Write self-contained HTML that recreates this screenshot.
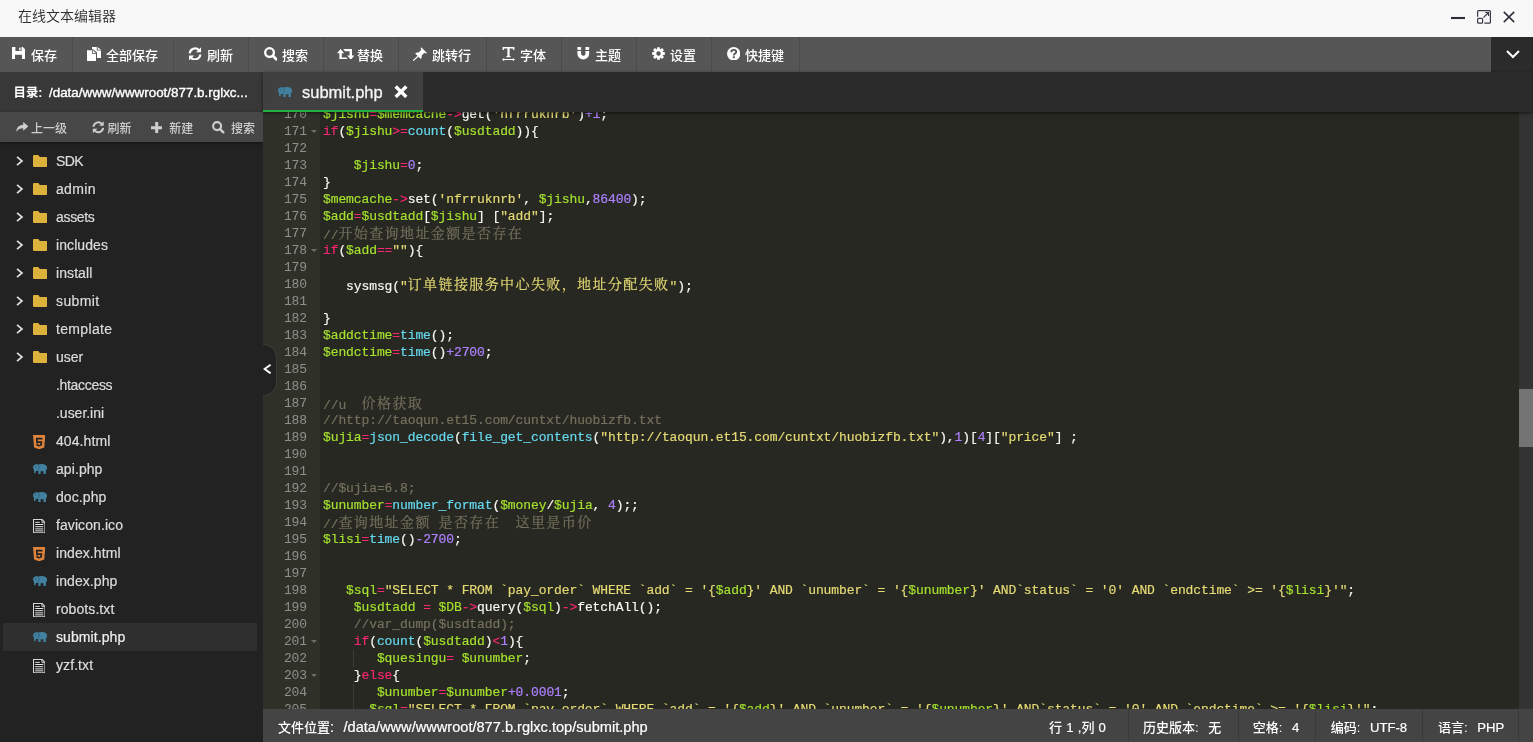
<!DOCTYPE html>
<html lang="zh-CN">
<head>
<meta charset="utf-8">
<title>在线文本编辑器</title>
<style>
*{box-sizing:border-box;margin:0;padding:0}
html,body{width:1533px;height:742px;overflow:hidden;background:#222}
body{position:relative;font-family:"Liberation Sans","Noto Sans CJK SC",sans-serif;font-size:13px;color:#fff}
svg{display:block}
#app{position:absolute;left:0;top:0;width:1533px;height:742px;will-change:transform}
#title{position:absolute;left:0;top:0;width:1533px;height:37px;background:#f8f8f8;color:#2e2e2e;font-weight:350;font-size:14px;line-height:32px;padding-left:18px}
#title .wc{position:absolute;top:0;height:37px}
#bar{position:absolute;left:0;top:37px;width:1533px;height:35px;background:#565656}
#bar .it{position:absolute;top:0;height:35px;border-right:1px solid #4c4c4c;line-height:35px;font-size:13px;color:#fff;white-space:nowrap}
#bar .it svg{position:absolute;top:10px;left:12px}
#bar .it b{position:absolute;font-weight:500;top:1px}
#bar .dd{position:absolute;right:0;top:0;width:42px;height:35px;background:#2b2b2b}
#side{position:absolute;left:0;top:72px;width:263px;height:670px;background:#222}
#dirt{position:absolute;left:0;top:0;width:263px;height:40px;background:#383838;font-weight:700;font-size:12.4px;line-height:42px;white-space:nowrap}
#dirt span{position:absolute;top:0}
#dirt .l{font-weight:400;font-size:13.4px;-webkit-text-stroke:0.36px}
#dtool{position:absolute;left:0;top:40px;width:263px;height:30px;background:#474747;color:#cdcdcd;font-size:12px;line-height:30px;box-shadow:0 1px 3px rgba(0,0,0,.5)}
#dtool span{position:absolute;top:2px;white-space:nowrap;font-weight:500}
#dtool svg{position:absolute}
#tree{position:absolute;left:0;top:75px;width:263px}
#tree .r{position:relative;height:28px;line-height:29px;font-size:14px;letter-spacing:0.08px;-webkit-text-stroke:0.2px;color:#dcdcdc;padding-left:56px;white-space:nowrap}
#tree .r.sel{background:#2f2f2f;margin:0 6px 0 3px;padding-left:53px;color:#f0f0f0}
#tree .r svg{position:absolute}
#tabs{position:absolute;left:263px;top:72px;width:1270px;height:40px;background:#2b2b2b;box-shadow:0 1px 3px rgba(0,0,0,.6);z-index:3}
#tab{position:absolute;left:0;top:0;width:160px;height:40px;background:#404040;border-bottom:2px solid #22b140;font-size:16.5px;line-height:41px;color:#f4f4f4;-webkit-text-stroke:0.3px}
#tab span{position:absolute;left:39px;top:0}
#ed{position:absolute;left:263px;top:112px;width:1256px;height:597px;background:#272822;overflow:hidden}
#gut{position:absolute;left:0;top:-6px;width:57px;bottom:0;background:#2f3129;color:#8f908a}
#code{position:absolute;left:60px;top:-6px;color:#f8f8f2}
.cl{-webkit-text-stroke:0.18px}
.gl,.cl{height:17px;line-height:17px;font-family:"Liberation Mono",monospace;font-size:13px;letter-spacing:-0.1px;white-space:pre}
.gl{position:relative;text-align:right;padding-right:13px}
.gl .fold{position:absolute;right:3.5px;top:7px;width:0;height:0;border-left:3px solid transparent;border-right:3px solid transparent;border-top:3.5px solid #6e6f69}
.cl .z{font-family:"Noto Serif CJK SC","Noto Sans CJK SC",serif;font-size:14px;letter-spacing:1.4px;position:relative;top:-1.5px}
.k{color:#f92672}.v{color:#a6e22e}.f{color:#66d9ef}.n{color:#ae81ff}.s{color:#e6db74}.c{color:#75715e}
.ig{display:inline-block;box-shadow:inset -1px 0 0 #3b3c35}
#sb{position:absolute;left:1519px;top:112px;width:14px;height:597px;background:#333}
#sb i{position:absolute;left:0;top:277px;width:14px;height:58px;background:#747474}
#status{position:absolute;left:263px;top:709px;width:1270px;height:33px;background:#444;font-size:13px;line-height:32px;color:#fff;z-index:4}
#status div{position:absolute;top:0;height:33px;white-space:nowrap;line-height:37px;font-weight:500}
#status .sp{border-left:1px solid #3a3a3a}
#status .l{font-size:14.6px;-webkit-text-stroke:0.2px}
#status .l2{font-size:13.1px;-webkit-text-stroke:0.2px}
#status .co{margin-right:6px}
#handle{position:absolute;left:263px;top:344px;width:14px;height:52px;background:#222;border-radius:0 14px 14px 0;z-index:5;border:1px solid #3a3b36;border-left:0}
</style>
</head>
<body>
<div id="app">
<div id="title">在线文本编辑器
<svg class="wc" width="90" height="37" viewBox="0 0 90 37" style="position:absolute;left:1443px;top:0"><path d="M8 18H22" stroke="#2e2d3c" stroke-width="2.1"/><g fill="none" stroke="#3a3948" stroke-width="1.2"><path d="M34.6 16.7V11.6Q34.6 10.6 35.6 10.6H46.4Q47.4 10.6 47.4 11.6V22.2Q47.4 23.2 46.4 23.2H41.3"/><rect x="34.6" y="18.4" width="5" height="4.8" rx="1"/><path d="M40.4 17.6L45.5 12.5M42.2 12.5H45.5V16"/></g><path d="M60.8 11.9L71.2 22.1M71.2 11.9L60.8 22.1" stroke="#2e2d3c" stroke-width="1.5"/></svg>
</div>
<div id="bar">
<div class="it" style="left:0px;width:73px"><svg width="13" height="12" viewBox="0 0 13 12" style="left:12.4px;top:10px"><path fill="#fff" fill-rule="evenodd" d="M0 0H10.8L13 2.2V12H0ZM3.4 0V4H9.6V0ZM3 7.8V12H10V7.8Z"/><rect fill="#fff" x="7.2" y="0.6" width="1.5" height="2.8"/></svg><b style="left:31px">保存</b></div>
<div class="it" style="left:73px;width:101px"><svg width="14" height="14" viewBox="0 0 14 14" style="left:14.2px;top:9.5px"><path fill="#fff" d="M0 3.2H5.2V7H9V14H0Z"/><path fill="#fff" d="M6 3.2L9 6.2H6Z"/><path fill="#fff" d="M5 0H9.8V3.6H14V11H10V5.6L6.6 2.4H5Z"/><path fill="#fff" d="M10.7 0L14 2.8H10.7Z"/></svg><b style="left:33px">全部保存</b></div>
<div class="it" style="left:174px;width:75px"><svg width="14.1" height="13.9" viewBox="0 0 13.5 13.5" style="left:14.4px;top:9.6px"><g fill="none" stroke="#fff" stroke-width="2.1"><path d="M1.6 6.2A5.2 5.2 0 0 1 10.6 3.1"/><path d="M11.9 7.3A5.2 5.2 0 0 1 2.9 10.4"/></g><path fill="#fff" d="M12.6 0.3V5.2H7.7Z"/><path fill="#fff" d="M0.9 13.2V8.3H5.8Z"/></svg><b style="left:33px">刷新</b></div>
<div class="it" style="left:249px;width:75px"><svg width="13.5" height="13.5" viewBox="0 0 13.5 13.5" style="left:14.8px;top:10.3px"><circle cx="5.55" cy="5.55" r="4.35" fill="none" stroke="#fff" stroke-width="2.3"/><path d="M8.8 8.8L12.3 12.3" stroke="#fff" stroke-width="2.7" stroke-linecap="round"/></svg><b style="left:33px">搜索</b></div>
<div class="it" style="left:324px;width:75px"><svg width="17.4" height="10.8" viewBox="0 0 17.4 10.8" style="left:12.8px;top:11.7px"><path fill="#fff" d="M3.6 0L7.2 4.2H4.8V8.6H9.4L11.2 10.8H2.4V4.2H0Z"/><path fill="#fff" d="M13.8 10.8L10.2 6.6H12.6V2.2H8L6.2 0H15V6.6H17.4Z"/></svg><b style="left:33px">替换</b></div>
<div class="it" style="left:399px;width:88px"><svg width="14.4" height="13.6" viewBox="0 0 14.4 13.6" style="left:14.4px;top:10.2px"><path fill="#fff" d="M8.2 0.2L14 6L12.6 6.6L11.4 5.8L8.6 8.6C9 10 8.6 11.2 7.8 12L2.2 6.4C3 5.6 4.2 5.2 5.6 5.6L8.4 2.8L7.6 1.6Z"/><path d="M4.8 9.4L0.4 13.4" stroke="#fff" stroke-width="1.3" stroke-linecap="round"/></svg><b style="left:33px">跳转行</b></div>
<div class="it" style="left:487px;width:75px"><svg width="13" height="14.2" viewBox="0 0 13 14.2" style="left:15px;top:9.9px"><path fill="#fff" d="M0.6 0H12.4V3H11.3C11.1 2 10.7 1.6 9.8 1.6H7.6V8.4C7.6 9 8 9.3 9 9.4V10.3H4V9.4C5 9.3 5.4 9 5.4 8.4V1.6H3.2C2.3 1.6 1.9 2 1.7 3H0.6Z"/><path fill="#fff" d="M0 12.6L2.2 11V12.1H10.8V11L13 12.6L10.8 14.2V13.1H2.2V14.2Z"/></svg><b style="left:33px">字体</b></div>
<div class="it" style="left:562px;width:75px"><svg width="12.6" height="12.6" viewBox="0 0 12.6 13.5" style="left:15.2px;top:10.4px"><path fill="#fff" d="M0 4.2H4V7.2A2.3 2.3 0 0 0 8.6 7.2V4.2H12.6V7.2A6.3 6.3 0 0 1 0 7.2Z"/><rect fill="#fff" x="0" y="0" width="4" height="3.1"/><rect fill="#fff" x="8.6" y="0" width="4" height="3.1"/></svg><b style="left:33px">主题</b></div>
<div class="it" style="left:637px;width:75px"><svg width="13" height="13" viewBox="0 0 13 13" style="left:15.1px;top:10.2px"><path fill="#fff" fill-rule="evenodd" d="M5.21 0.13L7.79 0.13L7.98 2.04L8.61 2.30L10.09 1.08L11.92 2.91L10.70 4.39L10.96 5.02L12.87 5.21L12.87 7.79L10.96 7.98L10.70 8.61L11.92 10.09L10.09 11.92L8.61 10.70L7.98 10.96L7.79 12.87L5.21 12.87L5.02 10.96L4.39 10.70L2.91 11.92L1.08 10.09L2.30 8.61L2.04 7.98L0.13 7.79L0.13 5.21L2.04 5.02L2.30 4.39L1.08 2.91L2.91 1.08L4.39 2.30L5.02 2.04ZM6.5 4.3A2.2 2.2 0 1 0 6.5 8.7A2.2 2.2 0 1 0 6.5 4.3Z"/></svg><b style="left:33px">设置</b></div>
<div class="it" style="left:712px;width:88px"><svg width="13.4" height="13.4" viewBox="0 0 13.4 13.4" style="left:14.8px;top:9.9px"><circle cx="6.7" cy="6.7" r="6.7" fill="#fff"/><path fill="none" stroke="#565656" stroke-width="1.9" d="M4.3 5.2C4.3 3.6 5.4 2.9 6.8 2.9C8.2 2.9 9.2 3.7 9.2 4.9C9.2 6.6 6.8 6.5 6.8 8.5"/><rect x="5.8" y="9.3" width="2" height="1.9" fill="#565656"/></svg><b style="left:33px">快捷键</b></div>
<div class="dd"><svg width="14" height="9" viewBox="0 0 14 9" style="position:absolute;left:14.5px;top:12.5px"><path fill="none" stroke="#fff" stroke-width="2" d="M1 1L7 7L13 1"/></svg></div>
</div>
<div id="side">
<div id="dirt"><span style="left:13.5px">目录:</span><span class="l" style="left:49px">/data/www/wwwroot/877.b.rglxc...</span></div>
<div id="dtool"><svg width="12.4" height="9.8" viewBox="0 0 12.4 9.8" style="left:15.5px;top:10px"><path fill="#cdcdcd" d="M7.2 0L12.4 4.4L7.2 8.8V6.2C4 6.2 2 7.2 0.3 9.8C0.6 5.6 3 3 7.2 2.7Z"/></svg><span style="left:31px">上一级</span><svg width="12.6" height="12.6" viewBox="0 0 13.5 13.5" style="left:91.8px;top:9.2px"><g fill="none" stroke="#cdcdcd" stroke-width="2.1"><path d="M1.6 6.2A5.2 5.2 0 0 1 10.6 3.1"/><path d="M11.9 7.3A5.2 5.2 0 0 1 2.9 10.4"/></g><path fill="#cdcdcd" d="M12.6 0.3V5.2H7.7Z"/><path fill="#cdcdcd" d="M0.9 13.2V8.3H5.8Z"/></svg><span style="left:107.6px">刷新</span><svg width="11.4" height="11.4" viewBox="0 0 11.4 11.4" style="left:150.6px;top:10px"><path fill="#cdcdcd" d="M4.2 0H7.2V4.2H11.4V7.2H7.2V11.4H4.2V7.2H0V4.2H4.2Z"/></svg><span style="left:169.2px">新建</span><svg width="12.4" height="12.4" viewBox="0 0 13.5 13.5" style="left:212.2px;top:9.4px"><circle cx="5.55" cy="5.55" r="4.35" fill="none" stroke="#cdcdcd" stroke-width="2.3"/><path d="M8.8 8.8L12.3 12.3" stroke="#cdcdcd" stroke-width="2.7" stroke-linecap="round"/></svg><span style="left:231px">搜索</span></div>
<div id="tree">
<div class="r"><svg width="8" height="10" viewBox="0 0 8 10" style="left:15.5px;top:8.6px"><path fill="none" stroke="#e0e0e0" stroke-width="1.7" d="M1 0.8L6 5L1 9.2"/></svg><svg width="14.4" height="12" viewBox="0 0 14.4 12" style="left:32.8px;top:8px"><path fill="#dcb13c" d="M0 1.2Q0 0 1.2 0H5.4L6.8 2H13.3Q14.4 2 14.4 3.1V11Q14.4 12 13.3 12H1.1Q0 12 0 11Z"/></svg><span style="letter-spacing:-0.62px">SDK</span></div>
<div class="r"><svg width="8" height="10" viewBox="0 0 8 10" style="left:15.5px;top:8.6px"><path fill="none" stroke="#e0e0e0" stroke-width="1.7" d="M1 0.8L6 5L1 9.2"/></svg><svg width="14.4" height="12" viewBox="0 0 14.4 12" style="left:32.8px;top:8px"><path fill="#dcb13c" d="M0 1.2Q0 0 1.2 0H5.4L6.8 2H13.3Q14.4 2 14.4 3.1V11Q14.4 12 13.3 12H1.1Q0 12 0 11Z"/></svg><span style="letter-spacing:0.33px">admin</span></div>
<div class="r"><svg width="8" height="10" viewBox="0 0 8 10" style="left:15.5px;top:8.6px"><path fill="none" stroke="#e0e0e0" stroke-width="1.7" d="M1 0.8L6 5L1 9.2"/></svg><svg width="14.4" height="12" viewBox="0 0 14.4 12" style="left:32.8px;top:8px"><path fill="#dcb13c" d="M0 1.2Q0 0 1.2 0H5.4L6.8 2H13.3Q14.4 2 14.4 3.1V11Q14.4 12 13.3 12H1.1Q0 12 0 11Z"/></svg><span style="letter-spacing:-0.32px">assets</span></div>
<div class="r"><svg width="8" height="10" viewBox="0 0 8 10" style="left:15.5px;top:8.6px"><path fill="none" stroke="#e0e0e0" stroke-width="1.7" d="M1 0.8L6 5L1 9.2"/></svg><svg width="14.4" height="12" viewBox="0 0 14.4 12" style="left:32.8px;top:8px"><path fill="#dcb13c" d="M0 1.2Q0 0 1.2 0H5.4L6.8 2H13.3Q14.4 2 14.4 3.1V11Q14.4 12 13.3 12H1.1Q0 12 0 11Z"/></svg>includes</div>
<div class="r"><svg width="8" height="10" viewBox="0 0 8 10" style="left:15.5px;top:8.6px"><path fill="none" stroke="#e0e0e0" stroke-width="1.7" d="M1 0.8L6 5L1 9.2"/></svg><svg width="14.4" height="12" viewBox="0 0 14.4 12" style="left:32.8px;top:8px"><path fill="#dcb13c" d="M0 1.2Q0 0 1.2 0H5.4L6.8 2H13.3Q14.4 2 14.4 3.1V11Q14.4 12 13.3 12H1.1Q0 12 0 11Z"/></svg>install</div>
<div class="r"><svg width="8" height="10" viewBox="0 0 8 10" style="left:15.5px;top:8.6px"><path fill="none" stroke="#e0e0e0" stroke-width="1.7" d="M1 0.8L6 5L1 9.2"/></svg><svg width="14.4" height="12" viewBox="0 0 14.4 12" style="left:32.8px;top:8px"><path fill="#dcb13c" d="M0 1.2Q0 0 1.2 0H5.4L6.8 2H13.3Q14.4 2 14.4 3.1V11Q14.4 12 13.3 12H1.1Q0 12 0 11Z"/></svg><span style="letter-spacing:0.38px">submit</span></div>
<div class="r"><svg width="8" height="10" viewBox="0 0 8 10" style="left:15.5px;top:8.6px"><path fill="none" stroke="#e0e0e0" stroke-width="1.7" d="M1 0.8L6 5L1 9.2"/></svg><svg width="14.4" height="12" viewBox="0 0 14.4 12" style="left:32.8px;top:8px"><path fill="#dcb13c" d="M0 1.2Q0 0 1.2 0H5.4L6.8 2H13.3Q14.4 2 14.4 3.1V11Q14.4 12 13.3 12H1.1Q0 12 0 11Z"/></svg><span style="letter-spacing:0.33px">template</span></div>
<div class="r"><svg width="8" height="10" viewBox="0 0 8 10" style="left:15.5px;top:8.6px"><path fill="none" stroke="#e0e0e0" stroke-width="1.7" d="M1 0.8L6 5L1 9.2"/></svg><svg width="14.4" height="12" viewBox="0 0 14.4 12" style="left:32.8px;top:8px"><path fill="#dcb13c" d="M0 1.2Q0 0 1.2 0H5.4L6.8 2H13.3Q14.4 2 14.4 3.1V11Q14.4 12 13.3 12H1.1Q0 12 0 11Z"/></svg><span style="letter-spacing:-0.020000000000000004px">user</span></div>
<div class="r"><span style="letter-spacing:-0.32px">.htaccess</span></div>
<div class="r"><span style="letter-spacing:-0.020000000000000004px">.user.ini</span></div>
<div class="r"><svg width="12.3" height="14.3" viewBox="0 0 12.3 14.3" style="left:32.9px;top:7.6px"><path fill="#dc843c" d="M0 0H12.3L11.2 12.4L6.15 14.3L1.1 12.4Z"/><path fill="#222" d="M2.9 2.7H9.5V4.4H4.7L4.8 6.2H9.3L8.9 10.6L6.15 11.6L3.4 10.6L3.3 8.6H5L5.1 9.5L6.15 9.9L7.2 9.5L7.4 7.9H3.2Z"/></svg>404.html</div>
<div class="r"><svg width="14.4" height="10.1" viewBox="0 0 14.4 10.1" style="left:32.7px;top:8.8px"><path fill="#41809e" d="M3.2 0.3C1.2 0.3 0 1.8 0 3.6C0 4.6 0.4 5.4 1 6V8.4C1 9.3 1.9 9.5 2.3 9L2.7 8.5V6.9C3.2 7.1 3.8 7.1 4.4 6.9L5.3 6.3V10.1H7.6V7.3H10.5V10.1H12.9V6.6C13.5 6.1 13.9 5.4 14 4.6L14.15 6.2C14.6 4.2 14.2 2.6 13.2 1.6C12 0.4 10 0 8.6 0C7.4 0 6.4 0.2 5.6 0.6C4.9 0.4 4 0.3 3.2 0.3Z"/><path fill="none" stroke="#2b4f61" stroke-width="0.6" d="M4.7 1.1C6.5 1.7 6.9 4.2 5.3 5.6"/><circle cx="2.3" cy="3" r="0.45" fill="#222"/></svg>api.php</div>
<div class="r"><svg width="14.4" height="10.1" viewBox="0 0 14.4 10.1" style="left:32.7px;top:8.8px"><path fill="#41809e" d="M3.2 0.3C1.2 0.3 0 1.8 0 3.6C0 4.6 0.4 5.4 1 6V8.4C1 9.3 1.9 9.5 2.3 9L2.7 8.5V6.9C3.2 7.1 3.8 7.1 4.4 6.9L5.3 6.3V10.1H7.6V7.3H10.5V10.1H12.9V6.6C13.5 6.1 13.9 5.4 14 4.6L14.15 6.2C14.6 4.2 14.2 2.6 13.2 1.6C12 0.4 10 0 8.6 0C7.4 0 6.4 0.2 5.6 0.6C4.9 0.4 4 0.3 3.2 0.3Z"/><path fill="none" stroke="#2b4f61" stroke-width="0.6" d="M4.7 1.1C6.5 1.7 6.9 4.2 5.3 5.6"/><circle cx="2.3" cy="3" r="0.45" fill="#222"/></svg>doc.php</div>
<div class="r"><svg width="12.5" height="14.3" viewBox="0 0 12.5 14.3" style="left:32.9px;top:7.9px"><path fill="#141414" stroke="#d6d6d6" stroke-width="1.1" d="M0.55 0.55H9.1L11.95 3.5V13.75H0.55Z"/><path fill="none" stroke="#d6d6d6" stroke-width="0.9" d="M8.9 0.6V3.7H11.9"/><path stroke="#ececec" stroke-width="1" d="M2.2 3.3H6.8M2.2 5.5H10.3M2.2 7.7H10.3M2.2 9.9H10.3M2.2 11.9H10.3"/></svg>favicon.ico</div>
<div class="r"><svg width="12.3" height="14.3" viewBox="0 0 12.3 14.3" style="left:32.9px;top:7.6px"><path fill="#dc843c" d="M0 0H12.3L11.2 12.4L6.15 14.3L1.1 12.4Z"/><path fill="#222" d="M2.9 2.7H9.5V4.4H4.7L4.8 6.2H9.3L8.9 10.6L6.15 11.6L3.4 10.6L3.3 8.6H5L5.1 9.5L6.15 9.9L7.2 9.5L7.4 7.9H3.2Z"/></svg>index.html</div>
<div class="r"><svg width="14.4" height="10.1" viewBox="0 0 14.4 10.1" style="left:32.7px;top:8.8px"><path fill="#41809e" d="M3.2 0.3C1.2 0.3 0 1.8 0 3.6C0 4.6 0.4 5.4 1 6V8.4C1 9.3 1.9 9.5 2.3 9L2.7 8.5V6.9C3.2 7.1 3.8 7.1 4.4 6.9L5.3 6.3V10.1H7.6V7.3H10.5V10.1H12.9V6.6C13.5 6.1 13.9 5.4 14 4.6L14.15 6.2C14.6 4.2 14.2 2.6 13.2 1.6C12 0.4 10 0 8.6 0C7.4 0 6.4 0.2 5.6 0.6C4.9 0.4 4 0.3 3.2 0.3Z"/><path fill="none" stroke="#2b4f61" stroke-width="0.6" d="M4.7 1.1C6.5 1.7 6.9 4.2 5.3 5.6"/><circle cx="2.3" cy="3" r="0.45" fill="#222"/></svg>index.php</div>
<div class="r"><svg width="12.5" height="14.3" viewBox="0 0 12.5 14.3" style="left:32.9px;top:7.9px"><path fill="#141414" stroke="#d6d6d6" stroke-width="1.1" d="M0.55 0.55H9.1L11.95 3.5V13.75H0.55Z"/><path fill="none" stroke="#d6d6d6" stroke-width="0.9" d="M8.9 0.6V3.7H11.9"/><path stroke="#ececec" stroke-width="1" d="M2.2 3.3H6.8M2.2 5.5H10.3M2.2 7.7H10.3M2.2 9.9H10.3M2.2 11.9H10.3"/></svg>robots.txt</div>
<div class="r sel"><svg width="14.4" height="10.1" viewBox="0 0 14.4 10.1" style="left:29.700000000000003px;top:8.8px"><path fill="#41809e" d="M3.2 0.3C1.2 0.3 0 1.8 0 3.6C0 4.6 0.4 5.4 1 6V8.4C1 9.3 1.9 9.5 2.3 9L2.7 8.5V6.9C3.2 7.1 3.8 7.1 4.4 6.9L5.3 6.3V10.1H7.6V7.3H10.5V10.1H12.9V6.6C13.5 6.1 13.9 5.4 14 4.6L14.15 6.2C14.6 4.2 14.2 2.6 13.2 1.6C12 0.4 10 0 8.6 0C7.4 0 6.4 0.2 5.6 0.6C4.9 0.4 4 0.3 3.2 0.3Z"/><path fill="none" stroke="#2b4f61" stroke-width="0.6" d="M4.7 1.1C6.5 1.7 6.9 4.2 5.3 5.6"/><circle cx="2.3" cy="3" r="0.45" fill="#222"/></svg>submit.php</div>
<div class="r"><svg width="12.5" height="14.3" viewBox="0 0 12.5 14.3" style="left:32.9px;top:7.9px"><path fill="#141414" stroke="#d6d6d6" stroke-width="1.1" d="M0.55 0.55H9.1L11.95 3.5V13.75H0.55Z"/><path fill="none" stroke="#d6d6d6" stroke-width="0.9" d="M8.9 0.6V3.7H11.9"/><path stroke="#ececec" stroke-width="1" d="M2.2 3.3H6.8M2.2 5.5H10.3M2.2 7.7H10.3M2.2 9.9H10.3M2.2 11.9H10.3"/></svg>yzf.txt</div>
</div>
</div>
<div id="tabs"><div id="tab"><svg width="14.4" height="10.1" viewBox="0 0 14.4 10.1" style="position:absolute;left:14.6px;top:14.9px"><path fill="#41809e" d="M3.2 0.3C1.2 0.3 0 1.8 0 3.6C0 4.6 0.4 5.4 1 6V8.4C1 9.3 1.9 9.5 2.3 9L2.7 8.5V6.9C3.2 7.1 3.8 7.1 4.4 6.9L5.3 6.3V10.1H7.6V7.3H10.5V10.1H12.9V6.6C13.5 6.1 13.9 5.4 14 4.6L14.15 6.2C14.6 4.2 14.2 2.6 13.2 1.6C12 0.4 10 0 8.6 0C7.4 0 6.4 0.2 5.6 0.6C4.9 0.4 4 0.3 3.2 0.3Z"/><path fill="none" stroke="#2b4f61" stroke-width="0.6" d="M4.7 1.1C6.5 1.7 6.9 4.2 5.3 5.6"/><circle cx="2.3" cy="3" r="0.45" fill="#222"/></svg><span>submit.php</span><svg width="14" height="13.4" viewBox="0 0 14 13.4" style="position:absolute;left:130.9px;top:12.9px"><path d="M1.7 1.5L12.3 11.9M12.3 1.5L1.7 11.9" stroke="#fff" stroke-width="3.4"/></svg></div></div>
<div id="ed">
<div id="gut">
<div class="gl">170</div>
<div class="gl">171<i class="fold"></i></div>
<div class="gl">172</div>
<div class="gl">173</div>
<div class="gl">174</div>
<div class="gl">175</div>
<div class="gl">176</div>
<div class="gl">177</div>
<div class="gl">178<i class="fold"></i></div>
<div class="gl">179</div>
<div class="gl">180</div>
<div class="gl">181</div>
<div class="gl">182</div>
<div class="gl">183</div>
<div class="gl">184</div>
<div class="gl">185</div>
<div class="gl">186</div>
<div class="gl">187</div>
<div class="gl">188</div>
<div class="gl">189</div>
<div class="gl">190</div>
<div class="gl">191</div>
<div class="gl">192</div>
<div class="gl">193</div>
<div class="gl">194</div>
<div class="gl">195</div>
<div class="gl">196</div>
<div class="gl">197</div>
<div class="gl">198</div>
<div class="gl">199</div>
<div class="gl">200</div>
<div class="gl">201<i class="fold"></i></div>
<div class="gl">202</div>
<div class="gl">203<i class="fold"></i></div>
<div class="gl">204</div>
<div class="gl">205</div>
</div>
<div id="code">
<div class="cl"><span class="v">$jishu</span><span class="k">=</span><span class="v">$memcache</span><span class="k">-&gt;</span>get(<span class="s">'nfrruknrb'</span>)<span class="n">+1</span>;</div>
<div class="cl"><span class="k">if</span>(<span class="v">$jishu</span><span class="k">&gt;=</span><span class="f">count</span>(<span class="v">$usdtadd</span>)){</div>
<div class="cl"></div>
<div class="cl">    <span class="v">$jishu</span><span class="k">=</span><span class="n">0</span>;</div>
<div class="cl">}</div>
<div class="cl"><span class="v">$memcache</span><span class="k">-&gt;</span>set(<span class="s">'nfrruknrb'</span>, <span class="v">$jishu</span>,<span class="n">86400</span>);</div>
<div class="cl"><span class="v">$add</span><span class="k">=</span><span class="v">$usdtadd</span>[<span class="v">$jishu</span>] [<span class="s">"add"</span>];</div>
<div class="cl"><span class="c">//<span class="z">开始查询地址金额是否存在</span></span></div>
<div class="cl"><span class="k">if</span>(<span class="v">$add</span><span class="k">==</span><span class="s">""</span>){</div>
<div class="cl"></div>
<div class="cl">   sysmsg(<span class="s">"<span class="z">订单链接服务中心失败，地址分配失败</span>"</span>);</div>
<div class="cl"></div>
<div class="cl">}</div>
<div class="cl"><span class="v">$addctime</span><span class="k">=</span><span class="f">time</span>();</div>
<div class="cl"><span class="v">$endctime</span><span class="k">=</span><span class="f">time</span>()<span class="n">+2700</span>;</div>
<div class="cl"></div>
<div class="cl"></div>
<div class="cl"><span class="c">//u  <span class="z">价格获取</span></span></div>
<div class="cl"><span class="c">//http://taoqun.et15.com/cuntxt/huobizfb.txt</span></div>
<div class="cl"><span class="v">$ujia</span><span class="k">=</span><span class="f">json_decode</span>(<span class="f">file_get_contents</span>(<span class="s">"http://taoqun.et15.com/cuntxt/huobizfb.txt"</span>),<span class="n">1</span>)[<span class="n">4</span>][<span class="s">"price"</span>] ;</div>
<div class="cl"></div>
<div class="cl"></div>
<div class="cl"><span class="c">//$ujia=6.8;</span></div>
<div class="cl"><span class="v">$unumber</span><span class="k">=</span><span class="f">number_format</span>(<span class="v">$money</span>/<span class="v">$ujia</span>, <span class="n">4</span>);;</div>
<div class="cl"><span class="c">//<span class="z">查询地址金额</span> <span class="z">是否存在</span>  <span class="z">这里是币价</span></span></div>
<div class="cl"><span class="v">$lisi</span><span class="k">=</span><span class="f">time</span>()<span class="n">-2700</span>;</div>
<div class="cl"></div>
<div class="cl"></div>
<div class="cl">   <span class="v">$sql</span><span class="k">=</span><span class="s">"SELECT * FROM `pay_order` WHERE `add` = '{</span><span class="v">$add</span><span class="s">}' AND `unumber` = '{</span><span class="v">$unumber</span><span class="s">}' AND`status` = '0' AND `endctime` &gt;= '{</span><span class="v">$lisi</span><span class="s">}'"</span>;</div>
<div class="cl">    <span class="v">$usdtadd</span> <span class="k">=</span> <span class="v">$DB</span><span class="k">-&gt;</span>query(<span class="v">$sql</span>)<span class="k">-&gt;</span>fetchAll();</div>
<div class="cl">    <span class="c">//var_dump($usdtadd);</span></div>
<div class="cl">    <span class="k">if</span>(<span class="f">count</span>(<span class="v">$usdtadd</span>)<span class="k">&lt;</span><span class="n">1</span>){</div>
<div class="cl"><span class="ig">    </span>   <span class="v">$quesingu</span><span class="k">=</span> <span class="v">$unumber</span>;</div>
<div class="cl">    }<span class="k">else</span>{</div>
<div class="cl"><span class="ig">    </span>   <span class="v">$unumber</span><span class="k">=</span><span class="v">$unumber</span><span class="n">+0.0001</span>;</div>
<div class="cl"><span class="ig">    </span>  <span class="v">$sql</span><span class="k">=</span><span class="s">"SELECT * FROM `pay_order` WHERE `add` = '{</span><span class="v">$add</span><span class="s">}' AND `unumber` = '{</span><span class="v">$unumber</span><span class="s">}' AND`status` = '0' AND `endctime` &gt;= '{</span><span class="v">$lisi</span><span class="s">}'"</span>;</div>
</div>
</div>
<div id="sb"><i></i></div>
<div id="handle"><svg width="8.4" height="10.2" viewBox="0 0 8.4 10.2" style="position:absolute;left:0.4px;top:18.8px"><path fill="none" stroke="#fff" stroke-width="1.9" d="M7.6 0.8L1.6 5.1L7.6 9.4"/></svg></div>
<div id="status">
<div style="left:15px;">文件位置<span class="l">:</span></div>
<div style="left:80.5px;"><span class="l">/data/www/wwwroot/877.b.rglxc.top/submit.php</span></div>
<div style="left:786px;word-spacing:0.6px">行 <span class="l2">1 ,</span>列 <span class="l2">0</span></div>
<div class="sp" style="left:865px;width:1px"></div><div style="left:880px;">历史版本<span class="co">:</span> 无</div>
<div class="sp" style="left:975px;width:1px"></div><div style="left:989.7px;">空格<span class="co">:</span> <span class="l2">4</span></div>
<div class="sp" style="left:1052px;width:1px"></div><div style="left:1067.7px;">编码<span class="co">:</span> <span class="l2">UTF-8</span></div>
<div class="sp" style="left:1159px;width:1px"></div><div style="left:1175px;">语言<span class="co">:</span> <span class="l2">PHP</span></div>
<div class="sp" style="left:1255px;width:1px"></div>

</div>
</div>
</body>
</html>
